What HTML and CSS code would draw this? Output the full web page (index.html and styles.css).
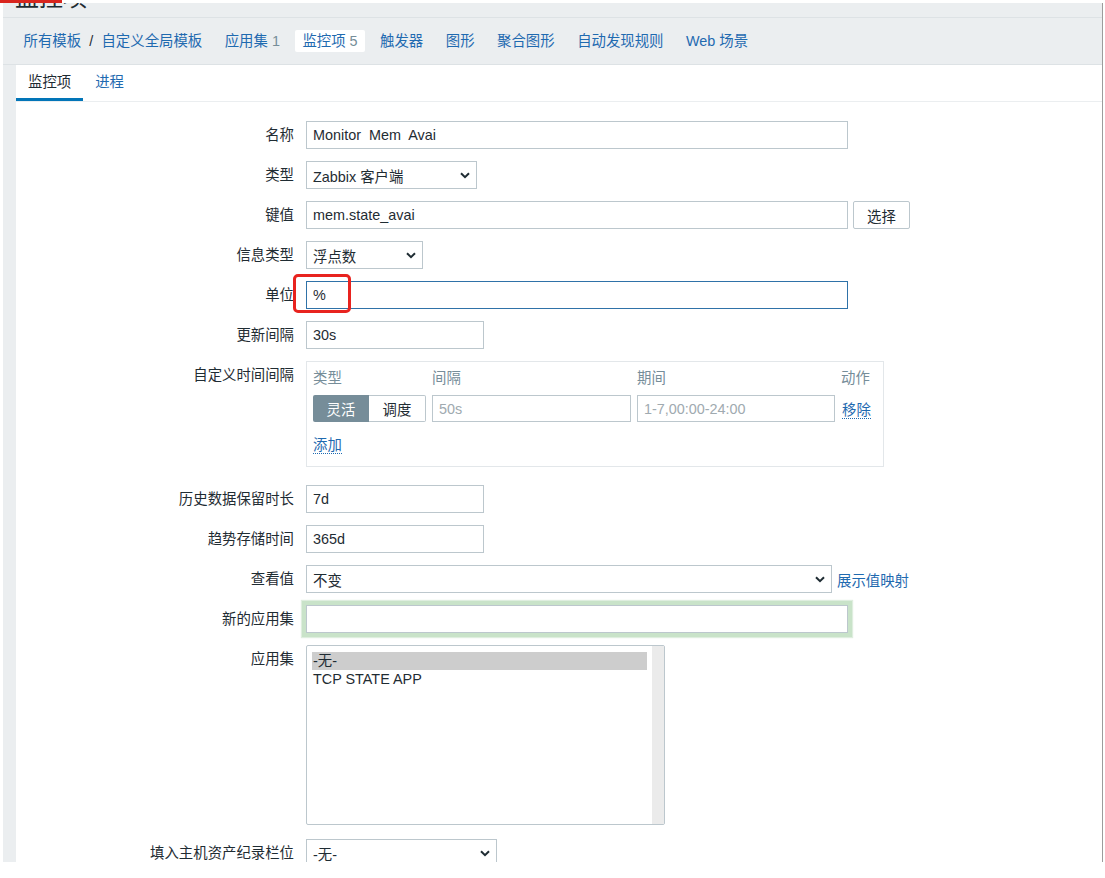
FILE: index.html
```html
<!DOCTYPE html>
<html lang="zh-CN">
<head>
<meta charset="utf-8">
<title>监控项</title>
<link rel="stylesheet" href="styles.css">
</head>
<body>
<div class="redmark"></div>
<div class="frame">
  <header class="page-title"><h1>监控项</h1></header>
  <nav class="crumbs">
    <span class="crumb"><a>所有模板</a><span class="sep">/</span><a>自定义全局模板</a></span>
    <a class="crumb">应用集 <span class="count">1</span></a>
    <span class="crumb active">监控项 <span class="count">5</span></span>
    <a class="crumb">触发器</a>
    <a class="crumb">图形</a>
    <a class="crumb">聚合图形</a>
    <a class="crumb">自动发现规则</a>
    <a class="crumb">Web 场景</a>
  </nav>
  <main class="panel">
    <div class="tabs">
      <span class="tab active">监控项</span>
      <span class="tab">进程</span>
    </div>
    <form class="form">
      <div class="row">
        <label class="lbl">名称</label>
        <div class="field"><input class="input w542" type="text" value="Monitor  Mem  Avai"></div>
      </div>
      <div class="row">
        <label class="lbl">类型</label>
        <div class="field"><div class="select w171"><span>Zabbix 客户端</span><svg class="chev" width="10" height="7" viewBox="0 0 10 7"><path d="M1 1.2l4 4 4-4" fill="none" stroke="#1f2c33" stroke-width="2"/></svg></div></div>
      </div>
      <div class="row">
        <label class="lbl">键值</label>
        <div class="field"><input class="input w542" type="text" value="mem.state_avai"><button type="button" class="btn">选择</button></div>
      </div>
      <div class="row">
        <label class="lbl">信息类型</label>
        <div class="field"><div class="select w117"><span>浮点数</span><svg class="chev" width="10" height="7" viewBox="0 0 10 7"><path d="M1 1.2l4 4 4-4" fill="none" stroke="#1f2c33" stroke-width="2"/></svg></div></div>
      </div>
      <div class="row">
        <label class="lbl">单位</label>
        <div class="field mark-host"><input class="input w542 focus" type="text" value="%"><span class="annot"></span></div>
      </div>
      <div class="row">
        <label class="lbl">更新间隔</label>
        <div class="field"><input class="input w178" type="text" value="30s"></div>
      </div>
      <div class="row">
        <label class="lbl">自定义时间间隔</label>
        <div class="field">
          <div class="intervals">
            <div class="igrid">
              <span class="ih">类型</span>
              <span class="ih">间隔</span>
              <span class="ih">期间</span>
              <span class="ih">动作</span>
              <div class="seg"><span class="seg-on">灵活</span><span class="seg-off">调度</span></div>
              <input class="input small" type="text" placeholder="50s">
              <input class="input small" type="text" placeholder="1-7,00:00-24:00">
              <span class="act"><a class="dlink">移除</a></span>
            </div>
            <div class="addrow"><a class="dlink">添加</a></div>
          </div>
        </div>
      </div>
      <div class="row gap-after-box">
        <label class="lbl">历史数据保留时长</label>
        <div class="field"><input class="input w178" type="text" value="7d"></div>
      </div>
      <div class="row">
        <label class="lbl">趋势存储时间</label>
        <div class="field"><input class="input w178" type="text" value="365d"></div>
      </div>
      <div class="row">
        <label class="lbl">查看值</label>
        <div class="field"><div class="select w526"><span>不变</span><svg class="chev" width="10" height="7" viewBox="0 0 10 7"><path d="M1 1.2l4 4 4-4" fill="none" stroke="#1f2c33" stroke-width="2"/></svg></div><a class="link">展示值映射</a></div>
      </div>
      <div class="row">
        <label class="lbl">新的应用集</label>
        <div class="field"><input class="input w542 glow" type="text" value=""></div>
      </div>
      <div class="row">
        <label class="lbl">应用集</label>
        <div class="field">
          <div class="listbox">
            <div class="opts">
              <div class="opt sel">-无-</div>
              <div class="opt">TCP STATE APP</div>
            </div>
            <div class="track"></div>
          </div>
        </div>
      </div>
      <div class="row after-list">
        <label class="lbl">填入主机资产纪录栏位</label>
        <div class="field"><div class="select w191"><span>-无-</span><svg class="chev" width="10" height="7" viewBox="0 0 10 7"><path d="M1 1.2l4 4 4-4" fill="none" stroke="#1f2c33" stroke-width="2"/></svg></div></div>
      </div>
    </form>
  </main>
</div>
</body>
</html>
```
FILE: styles.css
```css
* { box-sizing: border-box; }
html, body { margin: 0; padding: 0; background: #fff; }
body {
  font-family: "Liberation Sans", "Noto Sans CJK SC", sans-serif;
  font-size: 14.4px;
  color: #1f2c33;
  position: relative;
}
a { cursor: pointer; }

.redmark {
  position: absolute;
  left: 0; top: 0;
  width: 62px; height: 3px;
  background: #d9251e;
}

.frame {
  margin: 3px 0 0 3px;
  width: 1100px;
  height: 859px;
  background: #ebeef0;
  border-right: 1px solid #9c9c9c;
  overflow: hidden;
  display: flex;
  flex-direction: column;
}

.page-title {
  flex: none;
  height: 15px;
  border-bottom: 1px solid #dde2e5;
  overflow: hidden;
  padding-left: 12px;
}
.page-title h1 {
  margin: -20px 0 0;
  font-size: 24px;
  line-height: 30px;
  font-weight: normal;
  color: #1f2c33;
}

.crumbs {
  flex: none;
  height: 47px;
  border-bottom: 1px solid #dde2e5;
  display: flex;
  align-items: center;
  gap: 7.5px;
  padding-left: 13px;
}
.crumb {
  padding: 0 7.5px;
  line-height: 22px;
  color: #1f6ab0;
  border-radius: 2px;
  white-space: nowrap;
}
.crumb.active { background: #fff; }
.count { color: #768d99; }
.sep { color: #1f2c33; margin: 0 8.2px; }

.panel {
  flex: 1;
  margin-left: 13px;
  background: #fff;
}

.tabs {
  display: flex;
  height: 37px;
  border-bottom: 1px solid #ebeef0;
}
.tab {
  padding: 0 12px;
  height: 36px;
  line-height: 35px;
  color: #1f6ab0;
  border-bottom: 3px solid transparent;
}
.tab.active {
  color: #1f2c33;
  border-bottom-color: #0275b8;
}

.form {
  padding-top: 19px;
  display: flex;
  flex-direction: column;
  gap: 12px;
  margin: 0;
}
.row {
  display: grid;
  grid-template-columns: 278px auto;
  column-gap: 12px;
  align-items: start;
}
.row.gap-after-box { margin-top: 6px; }
.row.after-list { margin-top: 2px; }
.lbl {
  text-align: right;
  line-height: 28px;
  white-space: nowrap;
}
.field {
  display: flex;
  align-items: center;
  gap: 5px;
}

.input {
  height: 28px;
  border: 1px solid #bcc7cd;
  border-radius: 0;
  padding: 0 6px;
  font: inherit;
  color: #1f2c33;
  background: #fff;
  outline: none;
  margin: 0;
}
.input::placeholder { color: #a0aab0; }
.input.focus { border-color: #2f72a8; }
.input.glow {
  box-shadow: 0 0 0 4px #c9e3c9, 0 0 1px 5px rgba(201, 227, 201, 0.6);
}
.w542 { width: 542px; }
.w178 { width: 178px; }
.w171 { width: 171px; }
.w117 { width: 117px; }
.w526 { width: 526px; }
.w191 { width: 191px; }

.select {
  height: 28px;
  border: 1px solid #bcc7cd;
  background: #fff;
  display: flex;
  align-items: center;
  justify-content: space-between;
  padding: 0 6px;
  white-space: nowrap;
}
.chev { flex: none; }

.btn {
  width: 57px;
  height: 28px;
  border: 1px solid #bcc7cd;
  border-radius: 2px;
  background: #fff;
  font: inherit;
  color: #1f2c33;
  padding: 0;
}

.link { color: #1f6ab0; white-space: nowrap; }

.mark-host { position: relative; }
.annot {
  position: absolute;
  left: -13px;
  top: -7px;
  width: 58px;
  height: 39px;
  border: 3px solid #e8231f;
  border-radius: 5px;
  pointer-events: none;
}

.intervals {
  width: 578px;
  height: 106px;
  border: 1px solid #e3e7ea;
  padding: 5px 12px 0 6px;
}
.igrid {
  display: grid;
  grid-template-columns: 113px 199px 198px auto;
  column-gap: 6px;
  row-gap: 6px;
  align-items: center;
}
.igrid .act { padding-left: 1px; }
.ih {
  color: #768d99;
  line-height: 22px;
}
.seg {
  display: flex;
  height: 27px;
}
.seg span {
  flex: 1;
  display: flex;
  align-items: center;
  justify-content: center;
}
.seg-on {
  background: #768d99;
  color: #fff;
  border-radius: 2px 0 0 2px;
}
.seg-off {
  border: 1px solid #bcc7cd;
  border-left: none;
  border-radius: 0 2px 2px 0;
  color: #1f2c33;
}
.input.small { height: 27px; width: 100%; }
.dlink {
  color: #1f6ab0;
  border-bottom: 1px dotted #1f6ab0;
}
.addrow {
  margin-top: 12px;
  line-height: 22px;
}

.listbox {
  width: 359px;
  height: 180px;
  border: 1px solid #bcc7cd;
  border-radius: 2px;
  display: flex;
}
.opts {
  flex: 1;
  padding: 6px 5px 0 5px;
}
.opt {
  line-height: 18px;
  padding-left: 1px;
  white-space: nowrap;
}
.opt.sel { background: #cdcdcd; }
.track {
  width: 12px;
  background: #ebebeb;
}
```
